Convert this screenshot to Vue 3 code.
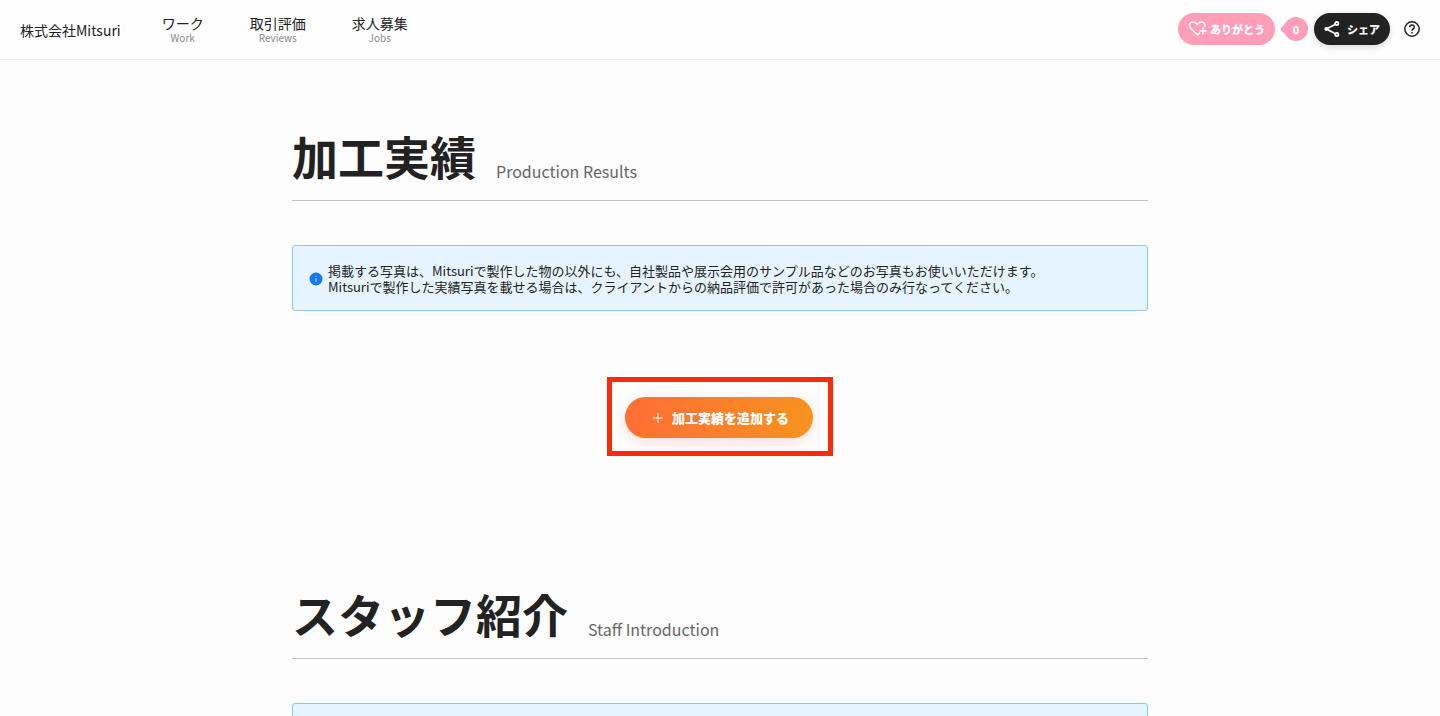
<script setup>
const company = '株式会社Mitsuri'

const navItems = [
  { id: 'work', label: 'ワーク', sub: 'Work' },
  { id: 'reviews', label: '取引評価', sub: 'Reviews' },
  { id: 'jobs', label: '求人募集', sub: 'Jobs' },
]

const resultNotes = [
  '掲載する写真は、Mitsuriで製作した物の以外にも、自社製品や展示会用のサンプル品などのお写真もお使いいただけます。',
  'Mitsuriで製作した実績写真を載せる場合は、クライアントからの納品評価で許可があった場合のみ行なってください。',
]
</script>

<template>
  <div class="page">
    <header class="header">
      <a class="company" href="#top">{{ company }}</a>
      <nav class="nav">
        <a v-for="item in navItems" :key="item.id" class="nav-item" :href="'#' + item.id">
          <span class="nav-label">{{ item.label }}</span>
          <span class="nav-sub">{{ item.sub }}</span>
        </a>
      </nav>
      <div class="actions">
        <button class="pill thanks" type="button">
          <svg width="20" height="16" viewBox="0 0 20 16" fill="none" stroke="currentColor" stroke-width="1.6" stroke-linecap="round" stroke-linejoin="round" aria-hidden="true">
            <path d="M9.500 14 3 7.600C1.100 5.700 1 3.400 2.400 2 4 .5 6.500.7 8 2.300L9.300 3.700 10.600 2.300C12.200.7 14.600.6 16 2c.9.9 1.100 2 .8 3.200" />
            <path d="M9.500 14 11.500 12M15 7v6M12 10h6" />
          </svg>
          <span>ありがとう</span>
        </button>
        <span class="count">
          <svg class="count-tail" width="8" height="16" viewBox="0 0 8 16" aria-hidden="true">
            <path d="M8 0 1 6.800Q0 8 1 9.200L8 16z" fill="currentColor" />
          </svg>
          <span class="count-value">0</span>
        </span>
        <button class="pill share" type="button">
          <svg width="16" height="16" viewBox="0 0 16 16" fill="none" stroke="currentColor" stroke-width="1.800" aria-hidden="true">
            <path d="M11.400 3.300 2.500 8l8.900 4.700" />
            <circle cx="2.300" cy="8" r="1" />
            <circle cx="12.800" cy="2.500" r="1.600" />
            <circle cx="12.800" cy="13.500" r="1.600" />
          </svg>
          <span>シェア</span>
        </button>
        <button class="help" type="button" aria-label="ヘルプ">
          <svg width="16" height="16" viewBox="0 0 16 16" fill="none" stroke="currentColor" stroke-width="1.500" aria-hidden="true">
            <circle cx="8" cy="8" r="7.200" />
            <path d="M5.700 6.300C5.700 4.900 6.700 4 8 4s2.300.9 2.300 2.200C10.300 7.700 8 8 8 9.700" />
            <path d="M8 11v1.600" />
          </svg>
        </button>
      </div>
    </header>

    <main class="main">
      <section class="section">
        <div class="heading">
          <h2 class="title">加工実績</h2>
          <span class="subtitle">Production Results</span>
        </div>
        <div class="notice">
          <svg class="info" width="14" height="14" viewBox="0 0 14 14" aria-hidden="true">
            <circle cx="7" cy="7" r="6.500" fill="#1876ff" />
            <path d="M7 6.200v4M7 3.700v1.200" stroke="#b9d9ff" stroke-width="1" />
          </svg>
          <p class="notice-text">
            <span v-for="line in resultNotes" :key="line" class="line">{{ line }}</span>
          </p>
        </div>
        <div class="frame">
          <button class="add" type="button">
            <svg width="10" height="10" viewBox="0 0 10 10" stroke="currentColor" stroke-width="1" aria-hidden="true">
              <path d="M5 0v10M0 5h10" />
            </svg>
            <span>加工実績を追加する</span>
          </button>
        </div>
      </section>

      <section class="section">
        <div class="heading">
          <h2 class="title">スタッフ紹介</h2>
          <span class="subtitle">Staff Introduction</span>
        </div>
        <div class="notice"></div>
      </section>
    </main>
  </div>
</template>

<style>
html,
body {
  height: 100%;
  overflow: hidden;
}
#app {
  height: 100%;
}
</style>

<style scoped>
.page {
  height: 100%;
  overflow: hidden;
  background: #fdfdfd;
  color: #222;
  font-family: "Noto Sans CJK JP", "Noto Sans", sans-serif;
}
button {
  margin: 0;
  border: 0;
  font-family: inherit;
  cursor: pointer;
}
a {
  color: inherit;
  text-decoration: none;
}
svg {
  display: block;
  flex: none;
}
.header {
  display: flex;
  align-items: center;
  box-sizing: border-box;
  height: 60px;
  padding: 0 20px;
  border-bottom: 1px solid #e8e8e8;
  background: #fefefe;
}
.company {
  font-size: 14px;
  line-height: 24px;
}
.nav {
  display: flex;
  gap: 46px;
  margin-left: 41px;
}
.nav-item {
  display: flex;
  flex-direction: column;
  align-items: center;
  gap: 1px;
}
.nav-label {
  font-size: 14px;
  line-height: 16px;
}
.nav-sub {
  font-size: 10px;
  line-height: 12px;
  color: #888;
}
.actions {
  display: flex;
  align-items: center;
  margin-left: auto;
  padding-bottom: 1px;
}
.pill {
  display: flex;
  align-items: center;
  height: 32px;
  padding: 0 10px;
  border-radius: 16px;
  color: #fff;
  font-size: 11px;
  font-weight: 900;
}
.thanks {
  gap: 2px;
  background: #ff9eb8;
}
.count {
  display: flex;
  align-items: center;
  margin: 0 6px 0 5px;
  color: #ff9eb8;
}
.count-tail {
  margin-right: -4px;
}
.count-value {
  width: 24px;
  height: 24px;
  border-radius: 50%;
  background: #ff9eb8;
  color: #fff;
  font-size: 11px;
  font-weight: 700;
  line-height: 24px;
  text-align: center;
}
.share {
  gap: 7px;
  background: #222;
  box-shadow: 0 2px 6px rgba(0, 0, 0, 0.16);
}
.help {
  margin-left: 14px;
  padding: 0;
  background: none;
  color: #222;
}
.main {
  max-width: 856px;
  margin: 0 auto;
  padding-top: 64px;
}
.section {
  margin-bottom: 126px;
}
.heading {
  display: flex;
  align-items: flex-end;
  gap: 20px;
  padding-bottom: 14px;
  border-bottom: 1px solid #c4c4c4;
}
.title {
  margin: 0;
  font-size: 46px;
  font-weight: 700;
  line-height: 62px;
}
.subtitle {
  color: #666;
  font-size: 16px;
  line-height: 30px;
}
.notice {
  display: flex;
  align-items: center;
  gap: 5px;
  box-sizing: border-box;
  min-height: 66px;
  margin-top: 44px;
  padding: 17px 16px 15px;
  border: 1px solid #8fc3f3;
  border-radius: 3px;
  background: #e6f4ff;
}
.notice-text {
  margin: 0;
  font-size: 13px;
  line-height: 16px;
}
.line {
  display: block;
}
.frame {
  width: fit-content;
  margin: 66px auto 0;
  padding: 15px 15px 13px 13px;
  border: 5px solid #fb2b05;
}
.add {
  display: flex;
  align-items: center;
  gap: 9px;
  height: 41px;
  padding: 0 24px 0 28px;
  border-radius: 21px;
  background: linear-gradient(100deg, #ff6d35, #f7931e);
  box-shadow: 0 4px 12px rgba(255, 80, 60, 0.18);
  color: #fff;
  font-size: 13px;
  font-weight: 900;
}
</style>
